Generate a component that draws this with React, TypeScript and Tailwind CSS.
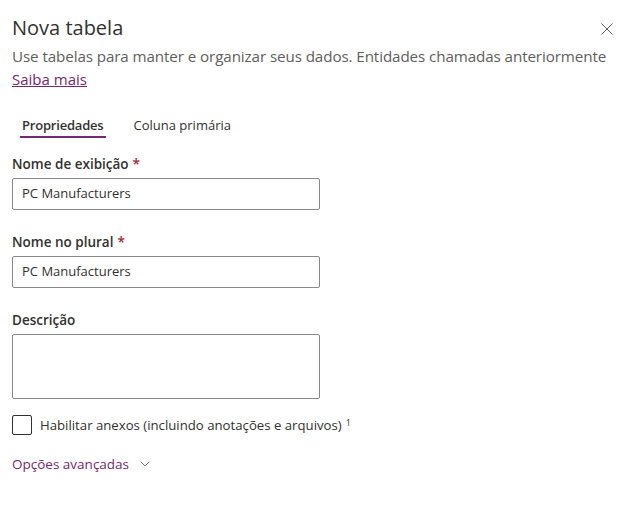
import { ChevronDown } from "lucide-react";

function Field({ label, required, value }: { label: string; required?: boolean; value: string }) {
    return (
        <div className="flex flex-col">
            <label className="text-[13.5px] font-semibold text-[#323130] leading-[20px] pb-[4px]">
                {label}
                {required && <span className="text-[#a4262c] ml-[4px]">*</span>}
            </label>
            <div className="w-[308px] h-[32px] border border-[#8a8886] rounded-[2px] flex items-center px-[9px] text-[13px] text-[#323130]">
                {value}
            </div>
        </div>
    );
}

export default function App() {
    return (
        <div
            className="w-[640px] h-[505px] bg-white px-[12px] pt-[14px] text-[#323130]"
            style={{ fontFamily: '"Segoe UI", "Open Sans", sans-serif' }}
        >
            <div className="flex items-start justify-between">
                <h1 className="text-[20px] font-normal leading-[28px] text-[#323130]">Nova tabela</h1>
                <button className="mt-[9px] mr-[15px] text-[#605e5c]">
                    <svg width="12" height="12" viewBox="0 0 12 12" fill="none" stroke="currentColor" strokeWidth="1">
                        <path d="M0.5 0.5 L11.5 11.5 M11.5 0.5 L0.5 11.5" />
                    </svg>
                </button>
            </div>
            <p className="text-[15.2px] leading-[21px] text-[#605e5c] mt-[4px] tracking-[-0.1px] whitespace-nowrap">
                Use tabelas para manter e organizar seus dados. Entidades chamadas anteriormente
            </p>
            <a className="text-[15px] leading-[21px] text-[#742774] underline">Saiba mais</a>

            <div className="flex gap-[28px] mt-[24px] pl-[8px]">
                <div className="flex flex-col">
                    <span className="text-[13px] font-semibold leading-[20px] px-[2px] tracking-[-0.2px]">Propriedades</span>
                    <div className="h-[2px] bg-[#742774] mt-[1px] self-stretch" />
                </div>
                <span className="text-[13px] leading-[20px] text-[#323130]">Coluna primária</span>
            </div>

            <div className="flex flex-col gap-[22px] mt-[16px]">
                <Field label="Nome de exibição" required value="PC Manufacturers" />
                <Field label="Nome no plural" required value="PC Manufacturers" />
                <div className="flex flex-col">
                    <label className="text-[13.5px] font-semibold leading-[20px] pb-[4px]">Descrição</label>
                    <div className="w-[308px] h-[65px] border border-[#8a8886] rounded-[2px]" />
                </div>
            </div>

            <div className="flex items-center gap-[8px] mt-[16px]">
                <div className="w-[20px] h-[20px] border border-[#323130] rounded-[2px]" />
                <span className="text-[13.2px] text-[#323130] leading-[20px]">
                    Habilitar anexos (incluindo anotações e arquivos)
                    <sup className="ml-[4px] text-[9px]">1</sup>
                </span>
            </div>

            <div className="flex items-center gap-[8px] mt-[19px] text-[#742774]">
                <span className="text-[13.5px] leading-[20px]">Opções avançadas</span>
                <ChevronDown className="w-[16px] h-[16px] text-[#605e5c]" strokeWidth={1.25} />
            </div>
        </div>
    );
}
